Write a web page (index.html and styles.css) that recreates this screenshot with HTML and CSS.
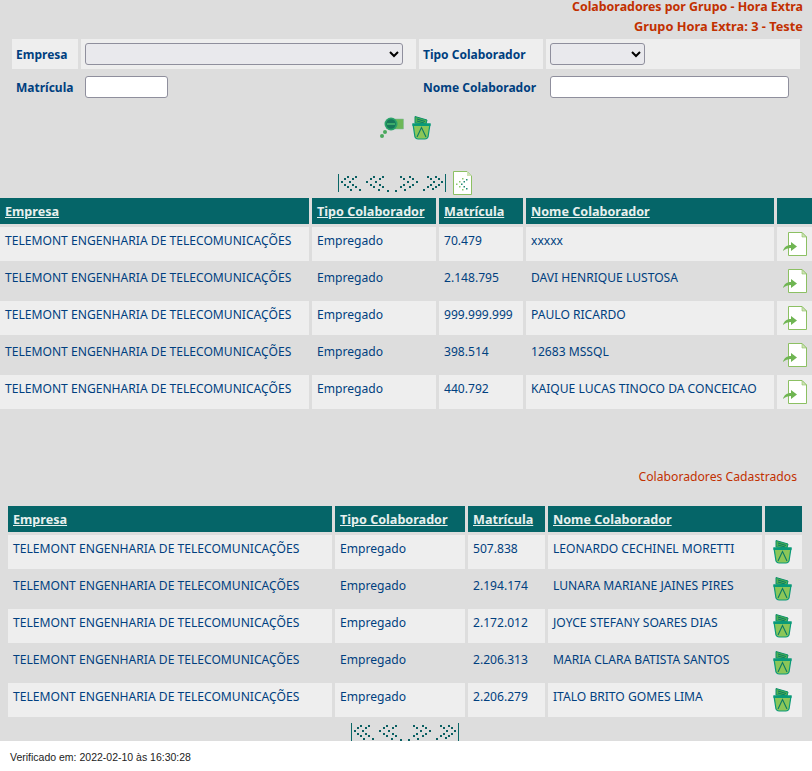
FILE: index.html
```html
<!DOCTYPE html>
<html lang="pt-BR">
<head>
  <meta charset="UTF-8">
  <title>Colaboradores por Grupo - Hora Extra</title>
  <link rel="stylesheet" href="styles.css">
</head>
<body>
  <svg class="defs" aria-hidden="true">
    <symbol id="trash" viewBox="0 0 19 24">
      <path d="M3 .5 L15 4 L14 8 L3 7 Z" fill="#4caf50" stroke="#0a8f6a"/>
      <path d="M5 3 L13 5.500 M5 5 L12 7" stroke="#0a7a66" fill="none"/>
      <path d="M1 8 H18 L16 21 Q15 23 13 23 H6 Q4 23 3 21 Z" fill="#8bc658" stroke="#0a9a78" stroke-width="1.200"/>
      <path d="M.5 7.500 H18.500 V10 H.5 Z" fill="#0a9a78"/>
      <path d="M5 21 L9.500 11.500 L14 21" fill="none" stroke="#0a7a66" stroke-width="1.100"/>
    </symbol>
    <symbol id="doc" viewBox="0 0 24 24">
      <path d="M5.500 .5 H19 L23.500 5 V23.500 H5.500 Z" fill="#fff" stroke="#8cc063"/>
      <path d="M19 .5 V5 H23.500 Z" fill="#cfe3b5" stroke="#8cc063" stroke-width=".6"/>
      <path d="M0 19 C1 15 4 13 8 13 V10 L14 14.500 L8 19 V16 C5 16 2 17 0 19 Z" fill="#6fb552"/>
    </symbol>
    <symbol id="search" viewBox="0 0 25 21">
      <rect x="15" y="2" width="9.500" height="10" fill="#6db757" stroke="#7fb8a0" stroke-width=".5"/>
      <circle cx="12" cy="7" r="6.500" fill="#2aa36a"/>
      <circle cx="12" cy="7" r="4.800" fill="#17785a"/>
      <rect x="8" y="6" width="8" height="2" fill="#3dab6a"/>
      <circle cx="6" cy="15" r="2" fill="#4aa85c"/>
      <circle cx="3" cy="19" r="2" fill="#4aa85c"/>
    </symbol>
    <symbol id="pager" viewBox="0 0 108 18">
      <path d="M.5 0 V18 M107.500 0 V18" stroke="#0a6666" fill="none"/>
      <g fill="#0a5f62">
        <path d="M9 2h2v2h-2z M6 4h2v2h-2z M3 7h2v2h-2z M6 10h2v2h-2z M9 12h2v2h-2z M12 15h2v2h-2z"/>
        <path d="M17 2h2v2h-2z M14 4h2v2h-2z M11 7h2v2h-2z M14 10h2v2h-2z M17 12h2v2h-2z M21 15h2v2h-2z"/>
        <path d="M35 2h2v2h-2z M32 4h2v2h-2z M28 7h2v2h-2z M32 10h2v2h-2z M35 12h2v2h-2z M40 15h2v2h-2z"/>
        <path d="M44 2h2v2h-2z M41 4h2v2h-2z M37 7h2v2h-2z M41 10h2v2h-2z M44 12h2v2h-2z M49 16h2v2h-2z"/>
        <path d="M57 16h2v2h-2z M62 12h2v2h-2z M65 10h2v2h-2z M69 7h2v2h-2z M65 4h2v2h-2z M62 2h2v2h-2z"/>
        <path d="M66 15h2v2h-2z M71 12h2v2h-2z M74 10h2v2h-2z M78 7h2v2h-2z M74 4h2v2h-2z M71 2h2v2h-2z"/>
        <path d="M85 15h2v2h-2z M89 12h2v2h-2z M92 10h2v2h-2z M95 7h2v2h-2z M92 4h2v2h-2z M89 2h2v2h-2z"/>
        <path d="M94 14h2v2h-2z M97 12h2v2h-2z M100 10h2v2h-2z M103 7h2v2h-2z M100 4h2v2h-2z M97 2h2v2h-2z"/>
      </g>
    </symbol>
    <symbol id="export" viewBox="0 0 19 24">
      <path d="M.5 .5 H14 L18.500 5 V23.500 H.5 Z" fill="#fff" stroke="#8cc063"/>
      <path d="M14 .5 V5 H18.500 Z" fill="#cfe3b5"/>
      <path d="M9 7h1.500v1.500h-1.500z M6 10h1.500v1.500h-1.500z M3 12.500h1.500v1.500h-1.500z M6 15h1.500v1.500h-1.500z M9 18h1.500v1.500h-1.500z" fill="#8ac86a"/>
      <path d="M13 8h1.500v1.500h-1.500z M10.500 10h1.500v1.500h-1.500z M8 12.500h1.500v1.500h-1.500z M10.500 15h1.500v1.500h-1.500z M13 17h1.500v1.500h-1.500z" fill="#1f8a72"/>
    </symbol>
  </svg>

  <div class="page">
    <div class="titulo">Colaboradores por Grupo - Hora Extra</div>
    <div class="titulo">Grupo Hora Extra: 3 - Teste</div>

    <table class="filtro">
      <colgroup>
        <col class="f1"><col class="f2"><col class="f3"><col class="f4">
      </colgroup>
      <tr class="par">
        <th>Empresa</th>
        <td><select class="sel-empresa"><option></option></select></td>
        <th>Tipo Colaborador</th>
        <td><select class="sel-tipo"><option></option></select></td>
      </tr>
      <tr>
        <th>Matrícula</th>
        <td><input type="text" class="inp-matricula"></td>
        <th>Nome Colaborador</th>
        <td><input type="text" class="inp-nome"></td>
      </tr>
    </table>

    <div class="acoes">
      <svg class="ic-search"><use href="#search"/></svg>
      <svg class="ic-trash-lg"><use href="#trash"/></svg>
    </div>

    <div class="paginacao">
      <svg class="ic-pager"><use href="#pager"/></svg>
      <svg class="ic-export"><use href="#export"/></svg>
    </div>

    <table class="grade grade-1">
      <colgroup>
        <col class="a1"><col class="a2"><col class="a3"><col class="a4"><col class="a5">
      </colgroup>
      <tr>
        <th><a href="#">Empresa</a></th>
        <th><a href="#">Tipo Colaborador</a></th>
        <th><a href="#">Matrícula</a></th>
        <th><a href="#">Nome Colaborador</a></th>
        <th></th>
      </tr>
      <tr class="par">
        <td>TELEMONT ENGENHARIA DE TELECOMUNICAÇÕES</td><td>Empregado</td><td>70.479</td><td>xxxxx</td>
        <td class="ic"><svg class="ic-doc"><use href="#doc"/></svg></td>
      </tr>
      <tr>
        <td>TELEMONT ENGENHARIA DE TELECOMUNICAÇÕES</td><td>Empregado</td><td>2.148.795</td><td>DAVI HENRIQUE LUSTOSA</td>
        <td class="ic"><svg class="ic-doc"><use href="#doc"/></svg></td>
      </tr>
      <tr class="par">
        <td>TELEMONT ENGENHARIA DE TELECOMUNICAÇÕES</td><td>Empregado</td><td>999.999.999</td><td>PAULO RICARDO</td>
        <td class="ic"><svg class="ic-doc"><use href="#doc"/></svg></td>
      </tr>
      <tr>
        <td>TELEMONT ENGENHARIA DE TELECOMUNICAÇÕES</td><td>Empregado</td><td>398.514</td><td>12683 MSSQL</td>
        <td class="ic"><svg class="ic-doc"><use href="#doc"/></svg></td>
      </tr>
      <tr class="par">
        <td>TELEMONT ENGENHARIA DE TELECOMUNICAÇÕES</td><td>Empregado</td><td>440.792</td><td>KAIQUE LUCAS TINOCO DA CONCEICAO</td>
        <td class="ic"><svg class="ic-doc"><use href="#doc"/></svg></td>
      </tr>
    </table>

    <div class="subtitulo">Colaboradores Cadastrados</div>

    <table class="grade grade-2">
      <colgroup>
        <col class="b1"><col class="b2"><col class="b3"><col class="b4"><col class="b5">
      </colgroup>
      <tr>
        <th><a href="#">Empresa</a></th>
        <th><a href="#">Tipo Colaborador</a></th>
        <th><a href="#">Matrícula</a></th>
        <th><a href="#">Nome Colaborador</a></th>
        <th></th>
      </tr>
      <tr class="par">
        <td>TELEMONT ENGENHARIA DE TELECOMUNICAÇÕES</td><td>Empregado</td><td>507.838</td><td>LEONARDO CECHINEL MORETTI</td>
        <td class="ic"><svg class="ic-trash"><use href="#trash"/></svg></td>
      </tr>
      <tr>
        <td>TELEMONT ENGENHARIA DE TELECOMUNICAÇÕES</td><td>Empregado</td><td>2.194.174</td><td>LUNARA MARIANE JAINES PIRES</td>
        <td class="ic"><svg class="ic-trash"><use href="#trash"/></svg></td>
      </tr>
      <tr class="par">
        <td>TELEMONT ENGENHARIA DE TELECOMUNICAÇÕES</td><td>Empregado</td><td>2.172.012</td><td>JOYCE STEFANY SOARES DIAS</td>
        <td class="ic"><svg class="ic-trash"><use href="#trash"/></svg></td>
      </tr>
      <tr>
        <td>TELEMONT ENGENHARIA DE TELECOMUNICAÇÕES</td><td>Empregado</td><td>2.206.313</td><td>MARIA CLARA BATISTA SANTOS</td>
        <td class="ic"><svg class="ic-trash"><use href="#trash"/></svg></td>
      </tr>
      <tr class="par">
        <td>TELEMONT ENGENHARIA DE TELECOMUNICAÇÕES</td><td>Empregado</td><td>2.206.279</td><td>ITALO BRITO GOMES LIMA</td>
        <td class="ic"><svg class="ic-trash"><use href="#trash"/></svg></td>
      </tr>
    </table>

    <div class="paginacao-2">
      <svg class="ic-pager"><use href="#pager"/></svg>
    </div>
  </div>

  <div class="rodape">Verificado em: 2022-02-10 às 16:30:28</div>
</body>
</html>
```

FILE: styles.css
```css
html, body {
  margin: 0;
  padding: 0;
  background: #fff;
  overflow: hidden;
}

body {
  font-family: "Noto Sans", sans-serif;
  font-size: 12.1px;
  color: #003f7f;
}

.defs {
  display: none;
}

.page {
  background: #dddddd;
  height: 741px;
  overflow: hidden;
}

.titulo {
  height: 20px;
  line-height: 14px;
  padding-right: 9px;
  text-align: right;
  font-size: 12.400px;
  font-weight: 700;
  color: #c23000;
}

.titulo + .titulo {
  line-height: 12px;
  font-size: 12.800px;
}

table {
  border-collapse: separate;
  border-spacing: 3px;
  table-layout: fixed;
}

th, td {
  padding: 0;
}

/* filtro */
.filtro {
  width: 794px;
  margin: -4px 0 0 9px;
}

.f1 { width: 66px; }
.f2 { width: 335px; }
.f3 { width: 124px; }
.f4 { width: 254px; }

.filtro tr {
  height: 30px;
}

.filtro th {
  padding-left: 4px;
  text-align: left;
  font-size: 12px;
  font-weight: 700;
}

.filtro td {
  padding-left: 4px;
}

.filtro .par th, .filtro .par td {
  background: #eeeeee;
}

select, input {
  display: block;
  box-sizing: border-box;
  height: 22px;
  margin: 0;
  border: 1px solid #8f8f9d;
  border-radius: 3px;
  font-family: inherit;
}

select {
  background: #e9e9ed;
}

input {
  background: #fff;
}

.sel-empresa { width: 318px; }
.sel-tipo { width: 95px; }
.inp-matricula { width: 83px; }
.inp-nome { width: 239px; }

/* botoes */
.acoes {
  display: flex;
  justify-content: center;
  align-items: flex-start;
  gap: 8px;
  height: 66px;
  padding: 11px 2px 0 0;
  box-sizing: border-box;
}

.ic-search {
  width: 25px;
  height: 21px;
  margin-top: 1px;
}

.ic-trash-lg {
  width: 19px;
  height: 24px;
}

.paginacao {
  display: flex;
  justify-content: center;
  align-items: center;
  gap: 7px;
  height: 24px;
  padding-right: 3px;
}

.ic-pager {
  display: block;
  width: 108px;
  height: 18px;
}

.ic-export {
  width: 19px;
  height: 24px;
}

/* grades */
.grade-1 {
  width: 818px;
  margin-left: -3px;
}

.a1 { width: 309px; }
.a2 { width: 124px; }
.a3 { width: 84px; }
.a4 { width: 248px; }
.a5 { width: 38px; }

.grade-2 {
  width: 800px;
  margin-left: 5px;
}

.b1 { width: 324px; }
.b2 { width: 130px; }
.b3 { width: 77px; }
.b4 { width: 214px; }
.b5 { width: 37px; }

.grade th {
  height: 26px;
  padding-left: 5px;
  background: #056568;
  text-align: left;
  font-size: 12.600px;
  font-weight: 700;
}

.grade th a {
  color: #e8f0ee;
}

.grade td {
  height: 34px;
  padding: 5px 0 0 5px;
  box-sizing: border-box;
  vertical-align: top;
  white-space: nowrap;
  overflow: hidden;
}

.grade .par td {
  background: #eeeeee;
}

.grade td.ic {
  padding: 5px 0 0 6px;
}

.ic-doc {
  display: block;
  width: 24px;
  height: 24px;
}

.ic-trash {
  display: block;
  width: 19px;
  height: 24px;
  margin-left: 2px;
}

.subtitulo {
  margin-top: 56px;
  height: 35px;
  padding-right: 15px;
  line-height: 17px;
  text-align: right;
  font-size: 12.200px;
  color: #c23000;
}

.paginacao-2 {
  display: flex;
  justify-content: center;
  padding: 3px 2px 0 0;
}

/* rodape */
.rodape {
  padding: 10px 0 0 10px;
  font-family: "Liberation Sans", sans-serif;
  font-size: 10.500px;
  color: #222;
}
```
